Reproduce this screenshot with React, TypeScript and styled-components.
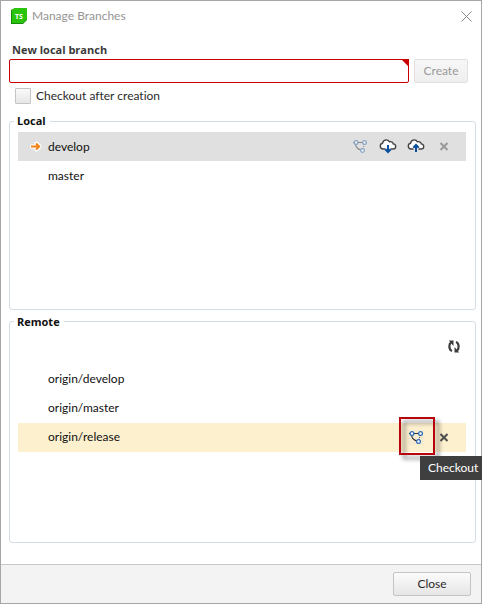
import { useState } from "react";
import styled, { createGlobalStyle, css } from "styled-components";

const GlobalStyle = createGlobalStyle`
  *, *::before, *::after { box-sizing: border-box; }
  body {
    margin: 0;
    background: #fff;
    color: #1a1a1a;
    font: 12px/16px Lato, "Open Sans", sans-serif;
    font-variant-ligatures: none;
  }
  button, input { font: inherit; }
`;

const heading = css`
  font-family: "Open Sans", "Noto Sans", sans-serif;
  font-size: 11px;
  font-weight: 700;
  line-height: 16px;
`;

const Dialog = styled.main`
  display: flex;
  flex-direction: column;
  min-height: 100vh;
  border: 1px solid #a6a6a6;
  background: #fff;
`;

const TitleBar = styled.header`
  display: flex;
  align-items: center;
  gap: 4px;
  height: 30px;
  padding: 0 8px 0 10px;
`;

const Title = styled.h1`
  flex: 1;
  margin: 0;
  font-size: 12px;
  font-weight: 400;
  color: #949494;
`;

const IconButton = styled.button<{ $width?: number }>`
  display: flex;
  align-items: center;
  justify-content: center;
  width: ${({ $width = 28 }) => $width}px;
  height: 25px;
  padding: 0;
  border: 0;
  background: none;
`;

const Content = styled.div`
  display: flex;
  flex: 1;
  flex-direction: column;
  padding: 11px 5px 21px 8px;
`;

const FieldLabel = styled.label`
  ${heading}
  padding: 0 3px;
  color: #3a3a3a;
`;

const CreateRow = styled.div`
  display: flex;
  gap: 5px;
  margin-top: 1px;
  padding-right: 8px;
`;

const NameField = styled.div`
  position: relative;
  flex: 1;

  &::after {
    content: "";
    position: absolute;
    top: 0;
    right: 0;
    border-top: 8px solid #c80000;
    border-left: 8px solid transparent;
  }
`;

const NameInput = styled.input`
  display: block;
  width: 100%;
  height: 24px;
  padding: 0 5px;
  border: 1px solid #c80000;
  border-radius: 2px;
  outline: 0;
  background: #fff;
`;

const PushButton = styled.button<{ $width: number }>`
  width: ${({ $width }) => $width}px;
  height: 24px;
  padding: 0;
  border: 1px solid #c4c4c4;
  border-radius: 2px;
  background: linear-gradient(#fbfbfb, #e6e6e6);
  color: #2a2a2a;

  &:disabled {
    border-color: #e0e0e0;
    background: linear-gradient(#f7f7f7, #efefef);
    color: #999;
  }
`;

const CheckLabel = styled.label`
  display: flex;
  align-items: center;
  gap: 5px;
  margin: 5px 0 9px 6px;
  color: #2a2a2a;
`;

const CheckBox = styled.input`
  appearance: none;
  width: 16px;
  height: 16px;
  margin: 0;
  border: 1px solid #c4c4c4;
  border-radius: 1px;
  background: linear-gradient(#fafafa, #e6e6e6);

  &:checked { background: #5a8fc8; }
`;

const Group = styled.fieldset<{ $basis: number }>`
  flex: 1 0 ${({ $basis }) => $basis}px;
  min-width: 0;
  margin: 0;
  padding: 3px 9px 8px 8px;
  border: 1px solid #d3dde5;
  border-radius: 3px;

  & + & { margin-top: 4px; }
`;

const GroupTitle = styled.legend`
  ${heading}
  margin-left: -4px;
  padding: 0 4px 0 3px;
  color: #111;
`;

const GroupTools = styled.div`
  display: flex;
  justify-content: flex-end;
  padding: 1px 0 6px;
`;

const Branches = styled.ul`
  margin: 0;
  padding: 0;
  list-style: none;
`;

const BranchRow = styled.li<{ $tone?: string }>`
  display: flex;
  align-items: center;
  height: 29px;
  padding: 0 8px 0 12px;
  background: ${({ $tone = "transparent" }) => $tone};
`;

const Marker = styled.span`
  display: flex;
  width: 18px;
`;

const BranchName = styled.span`
  flex: 1;
  color: #111;
`;

const ToolAnchor = styled.div`
  position: relative;
`;

const Highlight = styled.span`
  position: absolute;
  inset: -8px -5px -5px -3px;
  border: 2px solid #b8040c;
  filter: drop-shadow(4px 4px 2px rgba(0, 0, 0, 0.5));
  pointer-events: none;
`;

const Tooltip = styled.span`
  position: absolute;
  top: 31px;
  left: 18px;
  z-index: 1;
  height: 24px;
  padding: 0 6px 0 8px;
  background: #3f3f3f;
  color: #fff;
  line-height: 24px;
`;

const Footer = styled.footer`
  display: flex;
  justify-content: flex-end;
  padding: 7px 10px;
  border-top: 1px solid #c8c8c8;
  background: #f3f3f3;
`;

const LogoIcon = () => (
  <svg width="17" height="17" viewBox="0 0 17 17" aria-hidden="true">
    <path d="M4 0h12v12l-4 4H0V2z" fill="#148a08" />
    <path d="M4 0h12v11l-4 4H1V2z" fill="#2ac40c" />
    <text x="8" y="11" textAnchor="middle" fontFamily="Open Sans, sans-serif" fontSize="7" fontWeight="700" fill="#fff">TS</text>
  </svg>
);

const CloseIcon = () => (
  <svg width="11" height="11" viewBox="0 0 11 11" aria-hidden="true">
    <path d="M.5.5l10 10M10.5.5l-10 10" stroke="#888" fill="none" />
  </svg>
);

const ArrowIcon = () => (
  <svg width="12" height="11" viewBox="0 0 12 11" aria-hidden="true">
    <path d="M1.5 5.5h8M6.5 2.5l3 3-3 3" fill="none" stroke="#fff" strokeWidth="4" strokeLinejoin="round" strokeLinecap="round" />
    <path d="M1 5.5h8M6 2.5l3.2 3L6 8.5" fill="none" stroke="#f08418" strokeWidth="2" />
  </svg>
);

const CheckoutIcon = ({ faded = false }: { faded?: boolean }) => (
  <svg width="16" height="15" viewBox="0 0 16 15" opacity={faded ? 0.5 : 1} aria-hidden="true">
    {!faded && <path d="M0 0h16v15H0z" fill="#f5ebd1" />}
    <path d="M1 3.5h14M3.5 4C3.500 7.500 5.500 10.500 10 11.200" fill="none" stroke="#333" strokeWidth="1.2" />
    <path d="M12.500 5L11 9.500" fill="none" stroke="#333" strokeWidth="1" strokeDasharray="1 1" />
    <g fill="#fff" stroke="#2a68b0" strokeWidth="1.2">
      <circle cx="4" cy="3.500" r="1.900" />
      <circle cx="12.500" cy="3.500" r="1.900" />
      <circle cx="10.500" cy="11.500" r="1.900" />
    </g>
  </svg>
);

const CloudIcon = ({ up = false }: { up?: boolean }) => (
  <svg width="18" height="15" viewBox="0 0 18 15" aria-hidden="true">
    <path
      d="M6.5 10H4a2.9 2.9 0 0 1-.5-5.7C4 2.2 5.3.9 7.2.9c1.5 0 2.6.7 3.3 1.9 2.1-.5 3.5.6 3.7 2.1 1.6.2 2.5 1.2 2.5 2.5 0 1.6-1.1 2.6-2.7 2.6h-2.5z"
      fill="#fff"
    />
    <path
      d="M6.5 10H4a2.9 2.9 0 0 1-.5-5.7C4 2.2 5.3.9 7.2.9c1.5 0 2.6.7 3.3 1.9 2.1-.5 3.5.6 3.7 2.1 1.6.2 2.5 1.2 2.5 2.5 0 1.6-1.1 2.6-2.7 2.6h-2.5"
      fill="none"
      stroke="#444"
      strokeWidth="1.4"
    />
    <path d={up ? "M9 13V7M6.3 8.7L9 6l2.7 2.7" : "M9 6v6M6.3 10.3L9 13l2.7-2.7"} fill="none" stroke="#0c4f9c" strokeWidth="2" />
  </svg>
);

const DeleteIcon = ({ faded = false }: { faded?: boolean }) => (
  <svg width="8" height="9" viewBox="0 0 8 9" aria-hidden="true">
    <path d="M.5 1l7 7M7.5 1l-7 7" stroke={faded ? "#999" : "#505050"} strokeWidth="2" fill="none" />
  </svg>
);

const RefreshIcon = () => (
  <svg width="12" height="13" viewBox="0 0 12 13" aria-hidden="true">
    <path d="M4 11C.8 10 .5 4 3.2 2.5M8 2c3.2 1 3.5 7 .8 8.5" fill="none" stroke="#3c3c3c" strokeWidth="2.2" />
    <path d="M.8.5h4.7V6zM11.200 12.500H6.500V7z" fill="#3c3c3c" />
  </svg>
);

export default function App() {
  const [name, setName] = useState("");
  const [checkout, setCheckout] = useState(false);

  return (
    <>
      <GlobalStyle />
      <Dialog>
        <TitleBar>
          <LogoIcon />
          <Title>Manage Branches</Title>
          <IconButton $width={14} aria-label="Close window"><CloseIcon /></IconButton>
        </TitleBar>
        <Content>
          <FieldLabel htmlFor="branch-name">New local branch</FieldLabel>
          <CreateRow>
            <NameField>
              <NameInput id="branch-name" value={name} onChange={(e) => setName(e.target.value)} />
            </NameField>
            <PushButton $width={54} disabled={!name}>Create</PushButton>
          </CreateRow>
          <CheckLabel>
            <CheckBox type="checkbox" checked={checkout} onChange={(e) => setCheckout(e.target.checked)} />
            Checkout after creation
          </CheckLabel>
          <Group $basis={196}>
            <GroupTitle>Local</GroupTitle>
            <Branches>
              <BranchRow $tone="#e0e0e0">
                <Marker><ArrowIcon /></Marker>
                <BranchName>develop</BranchName>
                <IconButton aria-label="Checkout develop" disabled><CheckoutIcon faded /></IconButton>
                <IconButton aria-label="Pull develop"><CloudIcon /></IconButton>
                <IconButton aria-label="Push develop"><CloudIcon up /></IconButton>
                <IconButton aria-label="Delete develop" disabled><DeleteIcon faded /></IconButton>
              </BranchRow>
              <BranchRow>
                <Marker />
                <BranchName>master</BranchName>
              </BranchRow>
            </Branches>
          </Group>
          <Group $basis={229}>
            <GroupTitle>Remote</GroupTitle>
            <GroupTools>
              <IconButton $width={24} aria-label="Refresh"><RefreshIcon /></IconButton>
            </GroupTools>
            <Branches>
              <BranchRow>
                <Marker />
                <BranchName>origin/develop</BranchName>
              </BranchRow>
              <BranchRow>
                <Marker />
                <BranchName>origin/master</BranchName>
              </BranchRow>
              <BranchRow $tone="#fdf0cf">
                <Marker />
                <BranchName>origin/release</BranchName>
                <ToolAnchor>
                  <IconButton aria-label="Checkout origin/release" aria-describedby="checkout-tip"><CheckoutIcon /></IconButton>
                  <Highlight />
                  <Tooltip id="checkout-tip" role="tooltip">Checkout</Tooltip>
                </ToolAnchor>
                <IconButton aria-label="Delete origin/release"><DeleteIcon /></IconButton>
              </BranchRow>
            </Branches>
          </Group>
        </Content>
        <Footer>
          <PushButton $width={78}>Close</PushButton>
        </Footer>
      </Dialog>
    </>
  );
}
